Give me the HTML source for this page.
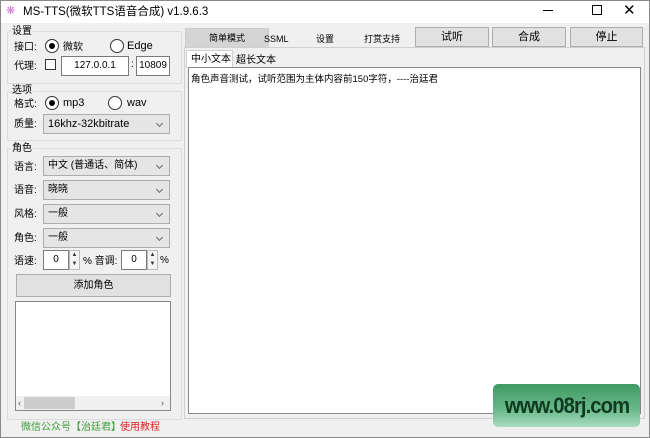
<!DOCTYPE html>
<html><head><meta charset="utf-8"><style>
*{box-sizing:border-box;margin:0;padding:0}
body{width:650px;height:438px;overflow:hidden;background:#f0f0f0;font-family:"Liberation Sans","Noto Sans CJK SC",sans-serif;font-size:10px;color:#000;position:relative;line-height:12px}
.a{position:absolute}
.l{position:absolute;margin-top:2px}
.win{position:absolute;left:0;top:0;width:650px;height:438px;border:1px solid #8a8a8a}
.title{position:absolute;left:0;top:0;width:650px;height:23px;background:#fff}
.gb{position:absolute;border:1px solid #dcdcdc;border-radius:2px}
.gl{position:absolute;background:#f0f0f0;padding:0 1px;font-size:10px;margin-top:2px}
.radio{position:absolute;width:14px;height:14px;border:1px solid #333;border-radius:50%;background:#fff}
.radio.on::after{content:"";position:absolute;left:3px;top:3px;width:6px;height:6px;border-radius:50%;background:#000}
.sel{position:absolute;height:20px;background:#e5e5e5;border:1px solid #adadad;padding-left:4px;padding-top:3px;line-height:12px;font-size:10px}
.sel::after{content:"";position:absolute;right:7px;top:6px;width:4px;height:4px;border-right:1px solid #666;border-bottom:1px solid #666;transform:rotate(45deg)}
.inp{position:absolute;height:20px;background:#fff;border:1px solid #7a7a7a;line-height:17px;text-align:center;font-size:10px}
.btn{position:absolute;background:#e1e1e1;border:1px solid #adadad;text-align:center;font-size:11px}
.spin{position:absolute;width:11px;height:20px;border:1px solid #bbb;background:#f4f4f4;font-size:6px;line-height:9px;text-align:center;color:#333}
</style></head><body>
<div class="title"></div>
<div class="a" style="left:6px;top:5px;color:#d070d0;font-size:11px">❋</div>
<div class="a" style="left:23px;top:5px;font-size:11.5px;line-height:14px">MS-TTS(微软TTS语音合成) v1.9.6.3</div>
<div class="a" style="left:543px;top:10px;width:10px;height:1px;background:#000"></div>
<div class="a" style="left:592px;top:5px;width:10px;height:10px;border:1px solid #000"></div>
<div class="a" style="left:623px;top:3px;font-size:15px;line-height:16px">✕</div>

<div class="gb" style="left:7px;top:31px;width:175px;height:53px"></div>
<div class="gl" style="left:11px;top:24px">设置</div>
<div class="l" style="left:14px;top:40px">接口:</div>
<div class="radio on" style="left:45px;top:39px"></div>
<div class="l" style="left:63px;top:40px">微软</div>
<div class="radio" style="left:110px;top:39px"></div>
<div class="a" style="left:127px;top:40px;font-size:11px">Edge</div>
<div class="l" style="left:14px;top:59px">代理:</div>
<div class="a" style="left:45px;top:59px;width:11px;height:11px;border:1px solid #333;background:#fff"></div>
<div class="inp" style="left:61px;top:56px;width:68px">127.0.0.1</div>
<div class="a" style="left:131px;top:59px">:</div>
<div class="inp" style="left:136px;top:56px;width:34px">10809</div>

<div class="gb" style="left:7px;top:91px;width:175px;height:50px"></div>
<div class="gl" style="left:11px;top:83px">选项</div>
<div class="l" style="left:14px;top:97px">格式:</div>
<div class="radio on" style="left:45px;top:96px"></div>
<div class="a" style="left:63px;top:97px;font-size:11px">mp3</div>
<div class="radio" style="left:108px;top:96px"></div>
<div class="a" style="left:127px;top:97px;font-size:11px">wav</div>
<div class="l" style="left:14px;top:117px">质量:</div>
<div class="sel" style="left:43px;top:114px;width:127px;font-size:11px">16khz-32kbitrate</div>

<div class="gb" style="left:7px;top:148px;width:175px;height:272px"></div>
<div class="gl" style="left:11px;top:141px">角色</div>
<div class="l" style="left:14px;top:160px">语言:</div>
<div class="sel" style="left:43px;top:156px;width:127px">中文 (普通话、简体)</div>
<div class="l" style="left:14px;top:183px">语音:</div>
<div class="sel" style="left:43px;top:180px;width:127px">晓晓</div>
<div class="l" style="left:14px;top:207px">风格:</div>
<div class="sel" style="left:43px;top:204px;width:127px">一般</div>
<div class="l" style="left:14px;top:231px">角色:</div>
<div class="sel" style="left:43px;top:228px;width:127px">一般</div>
<div class="l" style="left:14px;top:254px">语速:</div>
<div class="inp" style="left:43px;top:250px;width:26px">0</div>
<div class="spin" style="left:69px;top:250px">▲<br>▼</div>
<div class="l" style="left:83px;top:254px">% 音调:</div>
<div class="inp" style="left:121px;top:250px;width:26px">0</div>
<div class="spin" style="left:147px;top:250px">▲<br>▼</div>
<div class="a" style="left:160px;top:255px">%</div>
<div class="btn" style="left:16px;top:274px;width:155px;height:23px;line-height:21px;font-size:10px">添加角色</div>
<div class="a" style="left:15px;top:301px;width:156px;height:110px;background:#fff;border:1px solid #828790"></div>
<div class="a" style="left:16px;top:396px;width:154px;height:14px;background:#f0f0f0"></div>
<div class="a" style="left:24px;top:397px;width:51px;height:12px;background:#cdcdcd"></div>
<div class="a" style="left:18px;top:397px;font-size:9px;color:#555">‹</div>
<div class="a" style="left:161px;top:397px;font-size:9px;color:#555">›</div>

<div class="a" style="left:21px;top:422px;font-size:10px;color:#3a9a3a">微信公众号【治廷君】</div>
<div class="a" style="left:120px;top:422px;font-size:10px;color:#e02020">使用教程</div>

<div class="a" style="left:185px;top:28px;width:84px;height:19px;background:#d4d4d4;border:1px solid #ccc;border-bottom:none;text-align:center;line-height:19px;font-size:9px">简单模式</div>
<div class="a" style="left:264px;top:33px;font-size:9px">SSML</div>
<div class="a" style="left:316px;top:33px;font-size:9px">设置</div>
<div class="a" style="left:364px;top:33px;font-size:9px">打赏支持</div>
<div class="btn" style="left:415px;top:27px;width:74px;height:20px;line-height:19px">试听</div>
<div class="btn" style="left:492px;top:27px;width:74px;height:20px;line-height:19px">合成</div>
<div class="btn" style="left:570px;top:27px;width:73px;height:20px;line-height:19px">停止</div>
<div class="a" style="left:184px;top:47px;width:461px;height:372px;border:1px solid #d0d0d0;background:#fff"></div>
<div class="a" style="left:185px;top:48px;width:459px;height:370px;background:#f0f0f0"></div>
<div class="a" style="left:186px;top:50px;width:47px;height:18px;background:#fff;border:1px solid #d0d0d0;border-bottom:none;padding-left:4px;line-height:17px;font-size:10px">中小文本</div>
<div class="l" style="left:236px;top:53px;font-size:10px">超长文本</div>
<div class="a" style="left:188px;top:67px;width:453px;height:347px;background:#fff;border:1px solid #828790;padding:6px 2px;font-size:9.5px">角色声音测试，试听范围为主体内容前150字符，----治廷君</div>

<div class="a" style="left:493px;top:384px;width:147px;height:43px;border-radius:5px;background:linear-gradient(#3f9a63,#6bb88a 60%,#a8dcc0);"></div>
<div class="a" style="left:495px;top:394px;width:144px;text-align:center;font-size:22px;line-height:24px;font-weight:bold;color:#0f3a22;letter-spacing:-1px;transform:scaleX(0.92)">www.08rj.com</div>
<div class="win"></div>
</body></html>
